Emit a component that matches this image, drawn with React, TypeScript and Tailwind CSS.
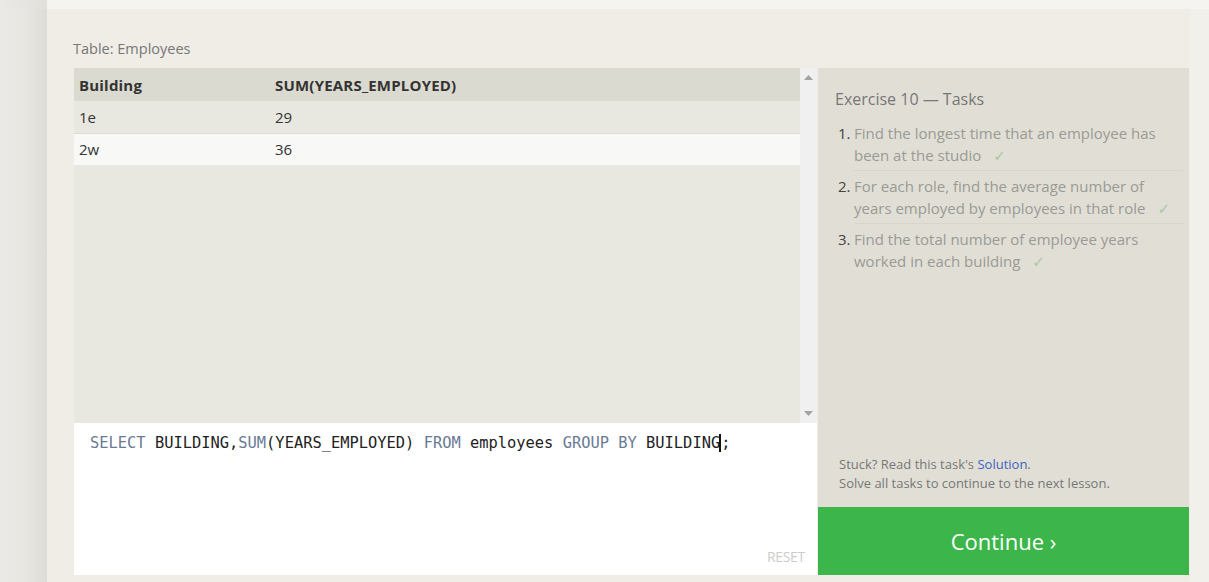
import React from "react";

const tasks = [
  ["Find the longest time that an employee has", "been at the studio"],
  ["For each role, find the average number of", "years employed by employees in that role"],
  ["Find the total number of employee years", "worked in each building"],
];

export default function App() {
  return (
    <div
      className="w-[1209px] h-[582px] flex flex-col overflow-hidden bg-[#f1efea]"
      style={{ fontFamily: '"Open Sans", "Noto Sans", sans-serif' }}
    >
      <div className="h-[9px] flex shrink-0">
        <div className="w-[47px] bg-gradient-to-r from-[#ebe9e5] to-[#e2e0db]" />
        <div className="flex-1 bg-[#f5f4f1]" />
      </div>
      <div className="flex flex-1">
        <div className="w-[47px] bg-gradient-to-r from-[#ebe9e5] via-[#e9e7e2] to-[#dedcd7]" />
        <div className="w-[1143px] bg-[#efede6] flex flex-col pl-[26px] pr-[1px]">
          <div className="h-[59px] pt-[30px] text-[14.5px] text-[#777] leading-[20px]">Table: Employees</div>
          <div className="flex h-[507px] pl-[1px]">
            <div className="w-[743px] flex flex-col">
              <div className="h-[355px] flex bg-[#e8e7e0]">
                <div className="w-[726px] flex flex-col">
                  <div className="h-[33px] flex items-center pt-[2px] bg-[#dbdad0] text-[15px] font-bold text-[#333] tracking-[0.2px]">
                    <div className="w-[201px] pl-[5px]">Building</div>
                    <div>SUM(YEARS_EMPLOYED)</div>
                  </div>
                  <div className="h-[33px] flex items-center bg-[#e8e7e0] text-[15px] text-[#333] border-b border-[#dcdcd6]">
                    <div className="w-[201px] pl-[5px]">1e</div>
                    <div>29</div>
                  </div>
                  <div className="h-[31px] flex items-center bg-[#f8f8f7] text-[15px] text-[#333]">
                    <div className="w-[201px] pl-[5px]">2w</div>
                    <div>36</div>
                  </div>
                </div>
                <div className="w-[17px] bg-[#f0f0f0] flex flex-col items-center justify-between py-[7px]">
                  <svg width="9" height="5" viewBox="0 0 9 5"><polygon points="4.5,0 9,5 0,5" fill="#a3a3a3" /></svg>
                  <svg width="9" height="5" viewBox="0 0 9 5"><polygon points="0,0 9,0 4.5,5" fill="#a3a3a3" /></svg>
                </div>
              </div>
              <div className="flex-1 bg-white relative pl-[16px] pt-[9px]">
                <div
                  className="text-[15.4px] leading-[22px] whitespace-pre text-[#222]"
                  style={{ fontFamily: '"DejaVu Sans Mono", "Liberation Mono", monospace' }}
                >
                  <span className="text-[#6a7a94]">SELECT</span> BUILDING,<span className="text-[#6a7a94]">SUM</span>(YEARS_EMPLOYED) <span className="text-[#6a7a94]">FROM</span> employees <span className="text-[#6a7a94]">GROUP BY</span> BUILDING<span className="border-l-[2px] border-[#111] -ml-[1px]"></span>;
                </div>
                <div className="absolute right-[12px] bottom-[8px] text-[14px] text-[#cccccc] tracking-[-0.3px]">RESET</div>
              </div>
            </div>
            <div className="w-[1px]" />
            <div className="w-[371px] flex flex-col">
              <div className="flex-1 bg-[#e1dfd5] flex flex-col pl-[17px] pr-[6px] pt-[20px]">
                <div className="text-[16px] text-[#777] leading-[22px]">Exercise 10 — Tasks</div>
                <div className="mt-[12px] flex flex-col">
                  {tasks.map((t, i) => (
                    <div key={i} className="flex text-[15px] leading-[22px] text-[#9a9a96]">
                      <div className="w-[19px] shrink-0 pl-[3px] text-[#444]">{i + 1}.</div>
                      <div className={"flex-1 pb-[3px] mb-[4px] " + (i < 2 ? "border-b border-[#d7d5cc]" : "")}>
                        <div>{t[0]}</div>
                        <div>
                          {t[1]}
                          <span className="ml-[12px] text-[#a8c8a2]" style={{ fontFamily: '"DejaVu Sans", sans-serif' }}>✓</span>
                        </div>
                      </div>
                    </div>
                  ))}
                </div>
                <div className="mt-auto mb-[14px] pl-[4px] text-[13px] leading-[19px] text-[#777]">
                  <div>
                    Stuck? Read this task's <span className="text-[#3d63c4]">Solution</span>.
                  </div>
                  <div>Solve all tasks to continue to the next lesson.</div>
                </div>
              </div>
              <div className="h-[68px] bg-[#3cb54a] flex items-center justify-center text-white text-[22px]">
                Continue ›
              </div>
            </div>
          </div>
        </div>
        <div className="flex-1 bg-[#f2f0eb]" />
      </div>
    </div>
  );
}
